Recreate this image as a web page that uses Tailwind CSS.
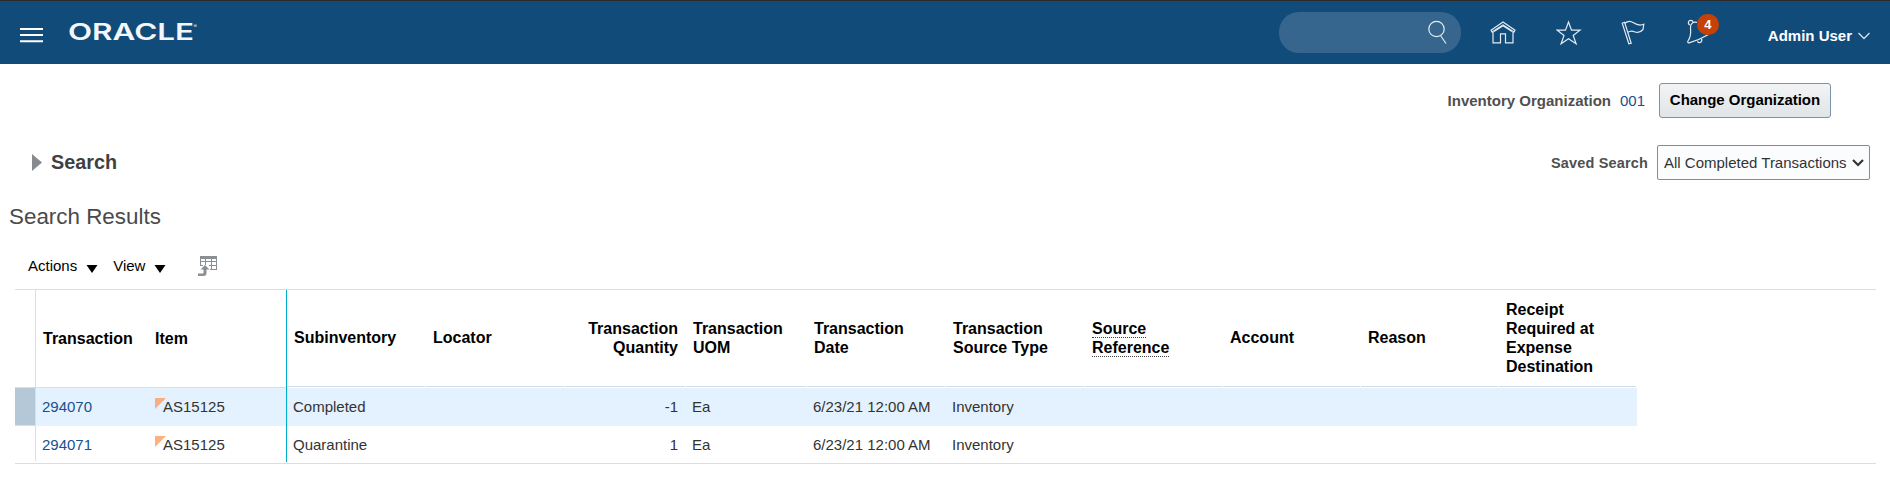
<!DOCTYPE html>
<html lang="en">
<head>
<meta charset="utf-8">
<title>Completed Transactions</title>
<script src="https://cdn.jsdelivr.net/npm/@tailwindcss/browser@4"></script>
</head>
<body class="bg-white font-['Liberation_Sans',Arial,sans-serif] text-[15px] leading-[19px] text-[#333] h-[493px] overflow-hidden">
<header class="h-16 bg-[#114b7a] border-t border-[#2b2b2b] flex">
  <button class="ml-5 mt-[27px] w-[23px] h-4" aria-label="Menu">
    <svg class="block" width="23" height="16" fill="#fff"><path d="M0 0h23v2H0zM0 6h23v2H0zM0 12.3h23v2H0z"/></svg>
  </button>
  <svg class="ml-[25px] mt-[19px] overflow-visible" width="134" height="28" fill="#f4f7fa">
    <text x="0" y="19.5" font-family="Inter, sans-serif" font-weight="600" font-size="22.5" textLength="126" lengthAdjust="spacingAndGlyphs">ORACLE</text>
    <text x="125.500" y="8" font-family="Inter, sans-serif" font-size="5">®</text>
  </svg>
  <div class="ml-auto mr-[19px] flex">
    <div class="mt-[11px] w-[182px] h-[41px] rounded-[20px] bg-[#36668e]">
      <svg class="ml-[148px] mt-[8px]" width="22" height="26" fill="none" stroke="#e4ebf1" stroke-width="1.2"><circle cx="9.500" cy="9" r="7.700"/><path d="M13.500 15.500 19 23.500"/></svg>
    </div>
    <svg class="ml-[29px] mt-[19px]" width="26" height="26" fill="none" stroke="#e4ebf1" stroke-width="1.2"><path d="M1 10.200 13 2 25 10.200 24 12 13 5 2 12zM3 12v10.800h7.500v-9h5v9H23V12"/><path d="M4 11.500 13 5.700l9 5.800"/></svg>
    <svg class="ml-[40px] mt-[19px]" width="26" height="26" fill="none" stroke="#e4ebf1" stroke-width="1.200"><path d="m12.500 2 3 8.200H24l-6.800 5.300 2.900 8.300-7.600-5-7.400 5 2.900-8.300L1.200 10.200h8.300z"/></svg>
    <svg class="ml-[39px] mt-[19px]" width="26" height="26" fill="none" stroke="#e4ebf1" stroke-width="1.200"><path d="M1.200 3.200 3.600 2.200 10.200 23.200 7.800 23.800zM4 3.200C6.500 1 9.500.8 12.500 2.800s6.500 3 10.300 1.500l-.8 5.200c-2.500 3-6.200 3.200-8.700 2.200s-4.500-.8-6.900 1"/></svg>
    <div class="relative ml-[39px] mt-[12px] w-[32px] h-[34px]">
      <svg width="32" height="34" fill="none" stroke="#e4ebf1" stroke-width="1.200"><path d="M11 9.300C6.500 8.500 4.200 11 4.500 15c.2 5 1 8-2.300 12.500-.8 1.500-.6 2.500.8 2.300C8 28.500 15 26 22.500 21.500M11.500 28.200c.8 2.500 5 1.800 4.200-2.300M4 12A2.400 2.400 0 1 1 7.200 9.600"/></svg>
      <span class="absolute left-[11px] top-px w-[22px] h-[21px] rounded-full bg-[#c74005] text-white text-[13px] font-bold leading-[21px] text-center">4</span>
    </div>
    <div class="ml-[50px] mt-[25px] flex text-white font-bold"><span>Admin User</span>
      <svg class="ml-[5px] mt-[6px]" width="14" height="9" fill="none" stroke="#d5e0e9" stroke-width="1.300"><path d="m1.500 1 5.500 5.500L12.500 1"/></svg>
    </div>
  </div>
</header>

<div class="mt-[19px] h-[35px] flex justify-end items-center pr-[59px]">
  <span class="font-bold text-[#4f4f4f]">Inventory Organization</span>
  <a class="ml-[9px] text-[#145290]">001</a>
  <button class="ml-[14px] w-[172px] h-[35px] rounded-[3px] border border-[#7a93a8] bg-gradient-to-b from-[#f2f3f4] to-[#e0e5e8] font-bold text-black pb-[2px] tracking-[-0.03px]">Change Organization</button>
</div>

<div class="mt-[27px] h-[35px] flex items-center pl-8 pr-5">
  <svg width="10" height="17" fill="#878b8f"><path d="M0 0 10 8.500 0 17z"/></svg>
  <h2 class="ml-[9px] text-[19.800px] font-bold text-[#3f3f3f]">Search</h2>
  <label class="ml-auto mt-px font-bold text-[14.500px] text-[#4f4f4f] tracking-[0.160px]">Saved Search</label>
  <div class="ml-[9px] w-[213px] h-[35px] rounded-[2px] border border-[#7b9199] bg-[#fbfcfe] flex items-center pl-[6px]">
    <span>All Completed Transactions</span>
    <svg class="ml-[5px]" width="12" height="8" fill="none" stroke="#333" stroke-width="2.200"><path d="M1 1 6 6l5-5"/></svg>
  </div>
</div>

<h1 class="mt-[24px] ml-[9px] h-[26px] leading-[26px] text-[22.400px] text-[#4a4a4a]">Search Results</h1>

<div class="mt-[26px] pl-[28px] h-[20px] flex text-black">
  <span>Actions</span>
  <svg class="ml-[9px] mt-[9px]" width="12" height="8"><path d="M.5 0h11L6 8z"/></svg>
  <span class="ml-[15px]">View</span>
  <svg class="ml-[9px] mt-[9px]" width="12" height="8"><path d="M.5 0h11L6 8z"/></svg>
  <svg class="ml-[32px]" width="20" height="21" fill="none" stroke="#8a8f94">
    <path d="M2.500 1v9M18.500 1v13M7.500 3v6M13.500 3v11M2 5.500h17M2 9.500h3M11 9.500h8M12 13.500h7"/><path d="M2 1.500h17" stroke-width="3"/>
    <path d="M2.500 13.500 7 9l4.500 4.500H8.500V17c0 2-1 3-3 3H0v-2.500h4.500c.7 0 1-.4 1-1v-3z" fill="#8a8f94" stroke="none"/>
  </svg>
</div>

<main class="ml-[15px] mt-[13px] w-[1861px] h-[175px] border-y border-[#d6dfe6] flex">
  <section class="grid grid-cols-[20px_114px_137px] grid-rows-[98px_37px_38px] h-[173px] text-black">
    <div class="border-b border-[#d6dfe6]"></div>
    <div class="border-l border-b border-[#d6dfe6] flex items-center pl-[7px] font-bold text-[16px]">Transaction</div>
    <div class="border-b border-[#d6dfe6] flex items-center pl-[6px] font-bold text-[16px]">Item</div>
    <div class="bg-[#b5c8d7]"></div>
    <div class="border-l border-[#d6dfe6] bg-[#e4f1ff] flex items-center pl-[6px] text-[#145290]">294070</div>
    <div class="relative bg-[#e4f1ff] flex items-center pl-[14px] text-[#333]"><svg class="absolute left-[6px] top-[10px]" width="11" height="11" fill="#f7ae80"><path d="M0 0h11L0 11z"/></svg><span class="relative">AS15125</span></div>
    <div class="border-t border-[#d6dfe6]"></div>
    <div class="border-l border-[#d6dfe6] border-t border-t-[#edf1f4] mb-[2px] pt-[2px] flex items-center pl-[6px] text-[#145290]">294071</div>
    <div class="relative border-t border-[#edf1f4] mb-[2px] pt-[2px] flex items-center pl-[14px] text-[#333]"><svg class="absolute left-[6px] top-[10px]" width="11" height="11" fill="#ffb07d"><path d="M0 0h11L0 11z"/></svg><span class="relative">AS15125</span></div>
  </section>
  <section class="border-l border-[#00aecb] h-[172px]">
    <div class="grid grid-cols-[139px_139px_121px_121px_139px_139px_138px_138px_138px_138px] h-[98px] pb-px text-black font-bold text-[16px] *:border-b *:border-[#d3dde5] *:mr-px *:flex *:items-center *:pl-[7px]">
      <div class="pb-px">Subinventory</div>
      <div class="pb-px">Locator</div>
      <div class="justify-end text-right pr-[7px]">Transaction<br>Quantity</div>
      <div>Transaction<br>UOM</div>
      <div>Transaction<br>Date</div>
      <div>Transaction<br>Source Type</div>
      <div><span><span class="border-b border-dotted border-[#444]">Source<br>Reference</span></span></div>
      <div class="pb-px">Account</div>
      <div class="pb-px">Reason</div>
      <div>Receipt<br>Required at<br>Expense<br>Destination</div>
    </div>
    <div class="grid grid-cols-[139px_139px_121px_121px_139px_139px_138px_138px_138px_138px] h-[38px] pb-[2px] bg-[#e4f1ff] items-center *:pl-[6px]">
      <div>Completed</div><div></div><div class="text-right pr-[8px]">-1</div><div>Ea</div><div>6/23/21 12:00 AM</div><div>Inventory</div>
    </div>
    <div class="grid grid-cols-[139px_139px_121px_121px_139px_139px_138px_138px_138px_138px] h-[36px] items-center *:pl-[6px]">
      <div>Quarantine</div><div></div><div class="text-right pr-[8px]">1</div><div>Ea</div><div>6/23/21 12:00 AM</div><div>Inventory</div>
    </div>
  </section>
</main>
</body>
</html>
